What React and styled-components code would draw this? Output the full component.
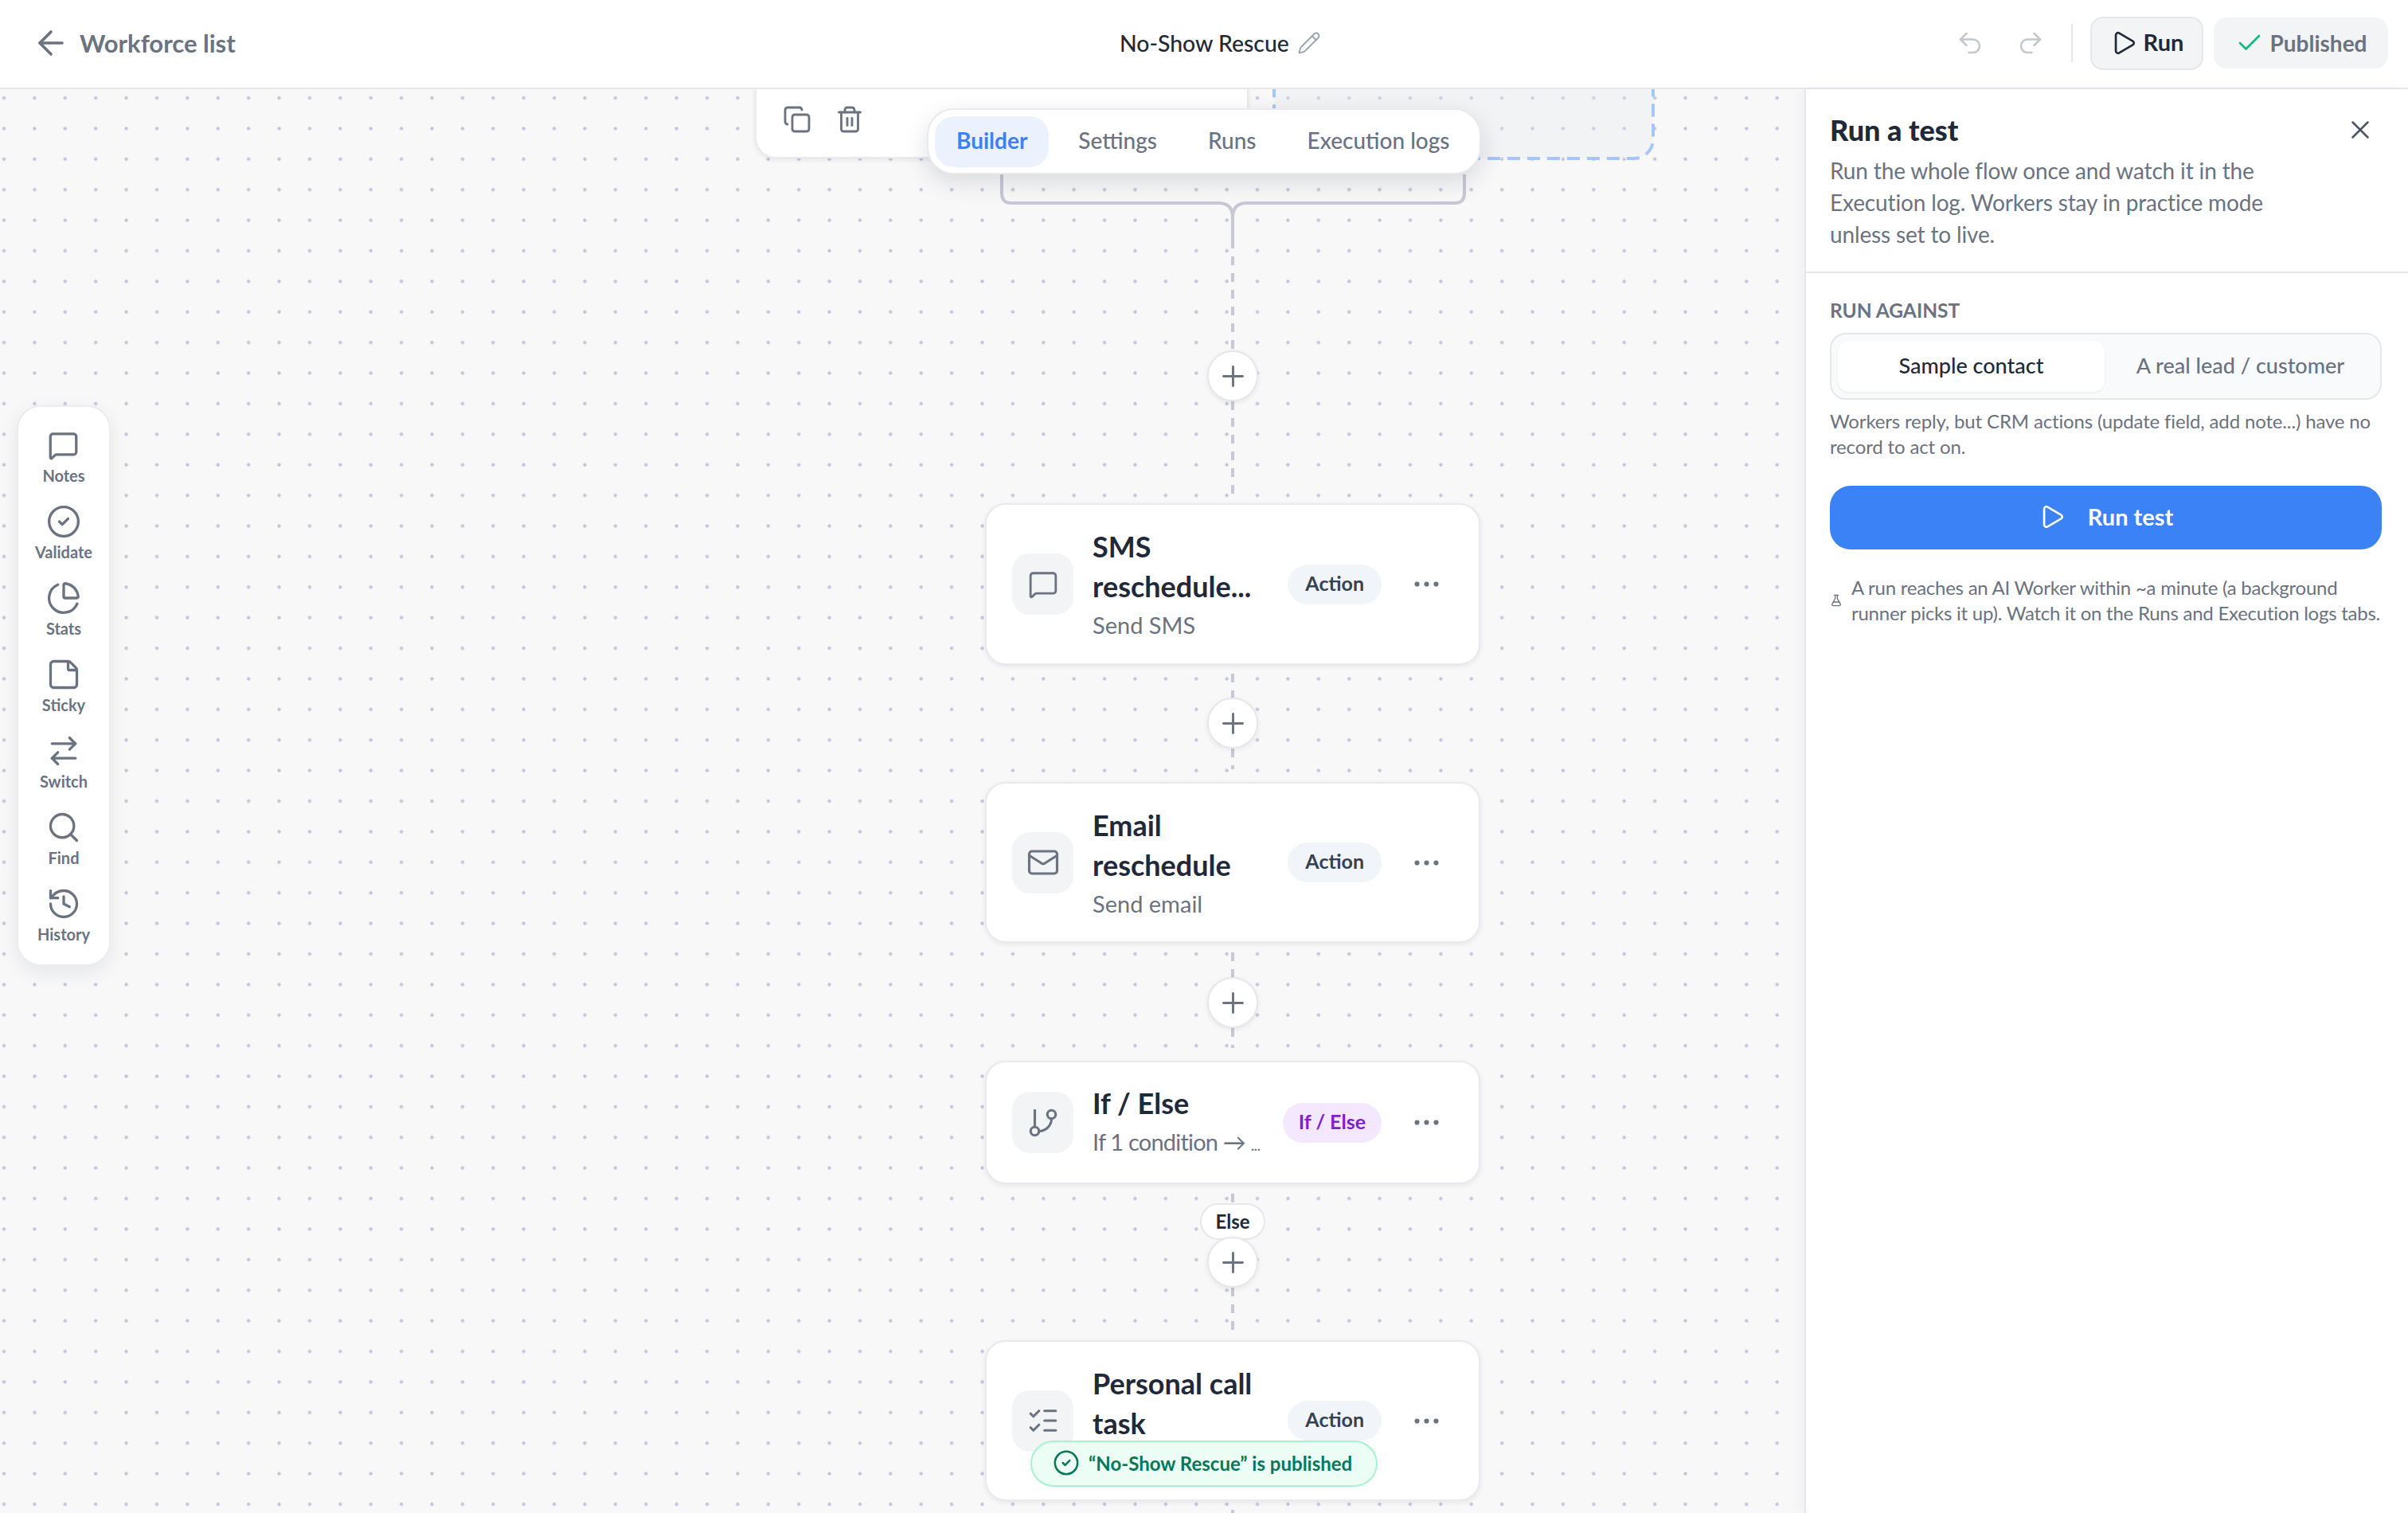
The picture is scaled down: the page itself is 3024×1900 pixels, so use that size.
import React from 'react';
import styled, { createGlobalStyle } from 'styled-components';
import {
  ArrowLeft, Pencil, Undo2, Redo2, Play, Check, X, Copy, Trash2, MessageSquare, CircleCheck,
  ChartPie, StickyNote, ArrowRightLeft, Search, History, Plus, Mail, GitBranch, ListChecks,
  Ellipsis, FlaskConical,
} from 'lucide-react';

const GlobalStyle = createGlobalStyle`
  html, body { margin: 0; padding: 0; background: #fff; }
  body { font-family: Lato, "Noto Sans", sans-serif; -webkit-font-smoothing: antialiased; }
  * { box-sizing: border-box; }
`;

const railItems = [
  { label: 'Notes', icon: MessageSquare, size: 39 },
  { label: 'Validate', icon: CircleCheck, size: 44 },
  { label: 'Stats', icon: ChartPie, size: 44 },
  { label: 'Sticky', icon: StickyNote, size: 44 },
  { label: 'Switch', icon: ArrowRightLeft, size: 44 },
  { label: 'Find', icon: Search, size: 44 },
  { label: 'History', icon: History, size: 44 },
];

function Node({ icon: Icon, iconSize = 42, title, sub, badge, purple, height }) {
  return (
    <Card $height={height}>
      <IconBox>
        <Icon size={iconSize} strokeWidth={1.8} />
      </IconBox>
      <CardText>
        <CardTitle>{title}</CardTitle>
        <CardSub>{sub}</CardSub>
      </CardText>
      <Badge $purple={purple}>{badge}</Badge>
      <MoreIcon size={41} strokeWidth={1.6} fill="currentColor" />
    </Card>
  );
}

function AddButton({ overlap }) {
  return (
    <AddCircle $overlap={overlap}>
      <Plus size={41} strokeWidth={1.7} />
    </AddCircle>
  );
}

export default function App() {
  return (
    <Page>
      <GlobalStyle />
      <TopBar>
        <BackLink>
          <ArrowLeft size={48} strokeWidth={1.8} />
          <span>Workforce list</span>
        </BackLink>
        <FlowName>
          <span>No-Show Rescue</span>
          <Pencil size={30} strokeWidth={1.5} color="#9ca3af" />
        </FlowName>
        <Actions>
          <HistoryButtons>
            <Undo2 size={36} strokeWidth={1.7} />
            <Redo2 size={36} strokeWidth={1.7} />
          </HistoryButtons>
          <Divider />
          <RunButton>
            <Play size={34} strokeWidth={1.9} />
            <span>Run</span>
          </RunButton>
          <PublishedButton>
            <Check size={36} strokeWidth={1.8} color="#10b981" />
            Published
          </PublishedButton>
        </Actions>
      </TopBar>
      <Main>
        <Canvas>
          <GroupOutline width="484" height="135" viewBox="0 0 484 135" fill="none">
            <rect
              x="4"
              y="4"
              width="476"
              height="127"
              rx="24"
              fill="#e5e7eb"
              fillOpacity="0.3"
              stroke="#a5c6f9"
              strokeWidth="4"
              strokeDasharray="16 9"
            />
          </GroupOutline>
          <CroppedNode>
            <Copy size={36} strokeWidth={1.9} />
            <Trash2 size={36} strokeWidth={1.9} />
          </CroppedNode>
          <Tabs>
            <Tab $active>Builder</Tab>
            <Tab>Settings</Tab>
            <Tab>Runs</Tab>
            <Tab>Execution logs</Tab>
          </Tabs>
          <Rail>
            {railItems.map(({ label, icon: Icon, size }) => (
              <RailItem key={label}>
                <RailIcon>
                  <Icon size={size} strokeWidth={size === 44 ? 1.8 : 2} />
                </RailIcon>
                <span>{label}</span>
              </RailItem>
            ))}
          </Rail>
          <FlowColumn>
            <BranchLines width="622" height="93" viewBox="0 0 622 93" fill="none">
              <path
                d="M21 0V24Q21 36 33 36H293Q311 36 311 54V93M602 0V24Q602 36 590 36H329Q311 36 311 54"
                stroke="#c8c7d6"
                strokeWidth="4"
              />
            </BranchLines>
            <Stem $h={118} $before={10} />
            <AddButton />
            <Stem $h={117} $after={11} />
            <Node
              icon={MessageSquare}
              iconSize={38}
              title={<>SMS<br />reschedule...</>}
              sub="Send SMS"
              badge="Action"
              height={203}
            />
            <Stem $h={30} $before={11} />
            <AddButton />
            <Stem $h={26} $after={16} />
            <Node icon={Mail} title={<>Email<br />reschedule</>} sub="Send email" badge="Action" height={202} />
            <Stem $h={31} $before={12} />
            <AddButton />
            <Stem $h={25} $after={16} />
            <Node
              icon={GitBranch}
              title="If / Else"
              sub={<Condition>If 1 condition → <small>...</small></Condition>}
              badge="If / Else"
              purple
              height={155}
            />
            <Stem $h={12} $before={12} />
            <ElseLabel>Else</ElseLabel>
            <AddButton overlap />
            <Stem $h={55} $after={11} />
            <Node icon={ListChecks} title={<>Personal call<br />task</>} sub={'\u00a0'} badge="Action" height={202} />
            <Stem $h={20} $before={11} />
          </FlowColumn>
          <Toast>
            <CircleCheck size={34} strokeWidth={1.8} />
            “No-Show Rescue” is published
          </Toast>
        </Canvas>
        <Panel>
          <PanelHead>
            <PanelTitleRow>
              <PanelTitle>Run a test</PanelTitle>
              <X size={38} strokeWidth={1.6} color="#4b5563" />
            </PanelTitleRow>
            <PanelDesc>
              Run the whole flow once and watch it in the<br />
              Execution log. Workers stay in practice mode<br />
              unless set to live.
            </PanelDesc>
          </PanelHead>
          <PanelBody>
            <FieldLabel>RUN AGAINST</FieldLabel>
            <Segmented>
              <Segment $active>Sample contact</Segment>
              <Segment>A real lead / customer</Segment>
            </Segmented>
            <Help>
              Workers reply, but CRM actions (update field, add note...) have no<br />
              record to act on.
            </Help>
            <RunTest>
              <Play size={34} strokeWidth={1.9} />
              Run test
            </RunTest>
            <Note>
              <FlaskConical size={16} strokeWidth={2} />
              <span>
                A run reaches an AI Worker within ~a minute (a background<br />
                runner picks it up). Watch it on the Runs and Execution logs tabs.
              </span>
            </Note>
          </PanelBody>
        </Panel>
      </Main>
    </Page>
  );
}

const Page = styled.div`
  width: 3024px;
  height: 1900px;
  display: flex;
  flex-direction: column;
  overflow: hidden;
  background: #fff;
`;

const TopBar = styled.header`
  flex: 0 0 112px;
  display: flex;
  align-items: center;
  padding: 0 25px 2px 40px;
  border-bottom: 2px solid #e5e7eb;
  background: #fff;
`;

const BackLink = styled.div`
  flex: 0 0 1366px;
  display: flex;
  align-items: center;
  gap: 12px;
  color: #6b7280;
  font-size: 31px;
  font-weight: 700;
`;

const FlowName = styled.div`
  display: flex;
  align-items: center;
  gap: 10px;
  color: #1f2937;
  font-size: 28.4px;
  font-weight: 500;
`;

const Actions = styled.div`
  margin-left: auto;
  display: flex;
  align-items: center;
`;

const HistoryButtons = styled.div`
  display: flex;
  gap: 40px;
  color: #c4c7cd;
`;

const Divider = styled.div`
  width: 2px;
  height: 48px;
  margin: 0 22px 0 33px;
  background: #e5e7eb;
`;

const RunButton = styled.div`
  width: 142px;
  height: 67px;
  display: flex;
  align-items: center;
  justify-content: center;
  gap: 8px;
  margin-right: 13px;
  border: 2px solid #e5e7eb;
  border-radius: 16px;
  background: #f3f4f6;
  color: #1f2937;
  font-size: 29px;
  font-weight: 700;

  span {
    margin-top: -3px;
  }
`;

const PublishedButton = styled.div`
  width: 219px;
  height: 64px;
  display: flex;
  align-items: center;
  justify-content: center;
  gap: 8px;
  border-radius: 16px;
  background: #f3f4f6;
  color: #6b7280;
  font-size: 28px;
  font-weight: 700;
`;

const Main = styled.div`
  flex: 1;
  display: flex;
  min-height: 0;
`;

const Canvas = styled.main`
  position: relative;
  flex: 1;
  min-width: 0;
  overflow: hidden;
  background-color: #f8f8f9;
  background-image: radial-gradient(circle, #c5c5d9 1.8px, transparent 2.5px);
  background-size: 38.4px 38.4px;
  background-position: -14.2px -8.2px;
`;

const GroupOutline = styled.svg`
  position: absolute;
  left: 1596px;
  top: -44px;
  display: block;
`;

const CroppedNode = styled.div`
  position: absolute;
  left: 948px;
  top: -30px;
  width: 620px;
  height: 117px;
  display: flex;
  align-items: flex-end;
  gap: 30px;
  padding: 0 0 29px 33px;
  background: #fff;
  border: 2px solid #e9e9ee;
  border-radius: 26px;
  box-shadow: 0 2px 6px rgba(17, 24, 39, 0.08);
  color: #6b7280;
`;

const Tabs = styled.nav`
  position: absolute;
  left: 1164px;
  top: 24px;
  z-index: 3;
  width: 696px;
  height: 83px;
  display: flex;
  align-items: center;
  padding: 0 8px;
  background: #fff;
  border: 2px solid #e9e9ee;
  border-radius: 34px;
  box-shadow: 0 10px 30px rgba(17, 24, 39, 0.13);
`;

const Tab = styled.div`
  height: 64px;
  display: flex;
  align-items: center;
  padding: 0 ${(p) => (p.$active ? '27px' : '32px')} 3px;
  margin-right: ${(p) => (p.$active ? '5px' : 0)};
  border-radius: 24px;
  background: ${(p) => (p.$active ? '#ebf1fd' : 'transparent')};
  color: ${(p) => (p.$active ? '#3b82f6' : '#6b7280')};
  font-size: 28px;
  font-weight: ${(p) => (p.$active ? 700 : 500)};
  white-space: nowrap;
`;

const Rail = styled.aside`
  position: absolute;
  left: 21px;
  top: 397px;
  z-index: 2;
  width: 118px;
  height: 704px;
  display: flex;
  flex-direction: column;
  align-items: center;
  gap: 24px;
  padding-top: 26px;
  background: #fff;
  border: 2px solid #ececf0;
  border-radius: 30px;
  box-shadow: 0 8px 24px rgba(17, 24, 39, 0.08);
`;

const RailItem = styled.div`
  display: flex;
  flex-direction: column;
  align-items: center;
  gap: 4px;
  color: #6b7280;
  font-size: 20px;
  line-height: 24px;
  font-weight: 700;
`;

const RailIcon = styled.div`
  width: 44px;
  height: 44px;
  display: flex;
  align-items: center;
  justify-content: center;
`;

const FlowColumn = styled.div`
  position: absolute;
  left: 1237px;
  top: 107px;
  width: 622px;
  display: flex;
  flex-direction: column;
  align-items: center;
`;

const BranchLines = styled.svg`
  display: block;
  flex: none;
`;

const Stem = styled.div`
  flex: none;
  width: 4px;
  height: ${(p) => p.$h}px;
  margin-top: ${(p) => p.$before || 0}px;
  margin-bottom: ${(p) => p.$after || 0}px;
  background: repeating-linear-gradient(to bottom, #c8c7d6 0 11px, transparent 11px 21px);
`;

const AddCircle = styled.div`
  position: relative;
  z-index: 1;
  flex: none;
  width: 64px;
  height: 64px;
  margin-top: ${(p) => (p.$overlap ? '-4px' : 0)};
  display: flex;
  align-items: center;
  justify-content: center;
  border: 2px solid #e7e7ec;
  border-radius: 50%;
  background: #fff;
  color: #6b7280;
  box-shadow: 0 2px 6px rgba(17, 24, 39, 0.08);
`;

const ElseLabel = styled.div`
  flex: none;
  width: 82px;
  height: 46px;
  display: flex;
  align-items: center;
  justify-content: center;
  padding-bottom: 2px;
  border: 2px solid #e7e7ec;
  border-radius: 23px;
  background: #fff;
  color: #1f2937;
  font-size: 24px;
  font-weight: 700;
`;

const Card = styled.article`
  flex: none;
  width: 622px;
  height: ${(p) => p.$height}px;
  display: flex;
  align-items: center;
  padding: 0 32px;
  background: #fff;
  border: 2px solid #e9e9ee;
  border-radius: 26px;
  box-shadow: 0 2px 6px rgba(17, 24, 39, 0.08);
`;

const IconBox = styled.div`
  flex: none;
  width: 77px;
  height: 77px;
  display: flex;
  align-items: center;
  justify-content: center;
  border-radius: 22px;
  background: #f3f4f6;
  color: #6b7280;
`;

const CardText = styled.div`
  width: 235px;
  margin-left: 24px;
  padding-top: 2px;
`;

const CardTitle = styled.div`
  color: #1f2937;
  font-size: 36px;
  line-height: 50px;
  font-weight: 700;
`;

const CardSub = styled.div`
  color: #6b7280;
  font-size: 29px;
  line-height: 47px;
  font-weight: 400;
  white-space: nowrap;
`;

const Condition = styled.span`
  letter-spacing: -0.8px;

  small {
    font-size: 20px;
  }
`;

const Badge = styled.div`
  margin-left: auto;
  height: 50px;
  display: flex;
  align-items: center;
  padding: 0 ${(p) => (p.$purple ? '20px' : '22px')} 4px;
  border-radius: 25px;
  background: ${(p) => (p.$purple ? '#f3e8ff' : '#f1f5f9')};
  color: ${(p) => (p.$purple ? '#7e22ce' : '#334155')};
  font-size: 25px;
  font-weight: 700;
`;

const MoreIcon = styled(Ellipsis)`
  flex: none;
  margin: 0 13px 0 36px;
  color: #6b7280;
`;

const Toast = styled.div`
  position: absolute;
  left: 1294px;
  top: 1697px;
  z-index: 4;
  width: 436px;
  height: 58px;
  display: flex;
  align-items: center;
  gap: 11px;
  padding: 0 0 2px 26px;
  border: 2px solid #a7f3d0;
  border-radius: 29px;
  background: #ecfdf5;
  color: #047857;
  font-size: 24px;
  font-weight: 700;
  white-space: nowrap;
`;

const Panel = styled.aside`
  position: relative;
  z-index: 5;
  flex: 0 0 758px;
  min-width: 0;
  border-left: 2px solid #e5e7eb;
  background: #fff;
  box-shadow: -6px 0 16px rgba(17, 24, 39, 0.04);
`;

const PanelHead = styled.div`
  padding: 28px 32px 27px 30px;
  border-bottom: 2px solid #e5e7eb;
`;

const PanelTitleRow = styled.div`
  display: flex;
  align-items: center;
  justify-content: space-between;
  padding-right: 9px;
`;

const PanelTitle = styled.h2`
  margin: 0;
  color: #1f2937;
  font-size: 36px;
  line-height: 46px;
  font-weight: 900;
`;

const PanelDesc = styled.p`
  margin: 8px 0 0;
  color: #6b7280;
  font-size: 28px;
  letter-spacing: -0.15px;
  line-height: 40px;
  white-space: nowrap;
`;

const PanelBody = styled.div`
  padding: 32px 33px 0 30px;
`;

const FieldLabel = styled.div`
  color: #6b7280;
  font-size: 24.5px;
  line-height: 30px;
  font-weight: 700;
`;

const Segmented = styled.div`
  height: 84px;
  margin-top: 13px;
  display: flex;
  align-items: center;
  padding: 0 8px;
  border: 2px solid #e5e7eb;
  border-radius: 20px;
  background: #f9fafb;
`;

const Segment = styled.div`
  flex: 0 0 ${(p) => (p.$active ? '335px' : '341px')};
  height: 64px;
  display: flex;
  align-items: center;
  justify-content: center;
  padding-bottom: 3px;
  border-radius: 14px;
  background: ${(p) => (p.$active ? '#fff' : 'transparent')};
  box-shadow: ${(p) => (p.$active ? '0 1px 3px rgba(17, 24, 39, 0.08)' : 'none')};
  color: ${(p) => (p.$active ? '#1f2937' : '#6b7280')};
  font-size: 27px;
  font-weight: 500;
`;

const Help = styled.p`
  margin: 11px 0 0;
  color: #6b7280;
  font-size: 24px;
  letter-spacing: -0.15px;
  line-height: 32px;
  white-space: nowrap;
`;

const RunTest = styled.div`
  height: 80px;
  margin-top: 33px;
  display: flex;
  align-items: center;
  justify-content: center;
  gap: 28px;
  padding-bottom: 3px;
  border-radius: 26px;
  background: #3b82f6;
  color: #fff;
  font-size: 29px;
  font-weight: 700;
`;

const Note = styled.div`
  margin-top: 32px;
  display: flex;
  align-items: center;
  gap: 11px;
  color: #6b7280;
  font-size: 24px;
  letter-spacing: -0.25px;
  line-height: 32px;
  white-space: nowrap;
`;
